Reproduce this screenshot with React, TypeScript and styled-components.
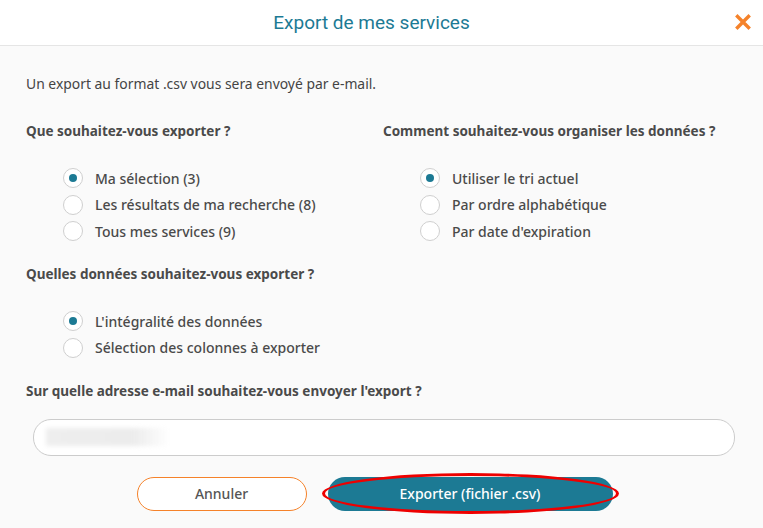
import styled, { createGlobalStyle } from 'styled-components';

const GlobalStyle = createGlobalStyle`
	html, body {
		margin: 0;
		padding: 0;
		background: #fafafa;
	}
	* {
		box-sizing: border-box;
	}
`;

const TEAL = '#1c7a94';
const ORANGE = '#f5822a';

const exportChoices = [
	{ label: 'Ma sélection (3)', checked: true },
	{ label: 'Les résultats de ma recherche (8)', checked: false },
	{ label: 'Tous mes services (9)', checked: false },
];

const sortChoices = [
	{ label: 'Utiliser le tri actuel', checked: true },
	{ label: 'Par ordre alphabétique', checked: false },
	{ label: "Par date d'expiration", checked: false },
];

const dataChoices = [
	{ label: "L'intégralité des données", checked: true },
	{ label: 'Sélection des colonnes à exporter', checked: false },
];

interface Choice {
	label: string;
	checked: boolean;
}

function RadioList({ choices }: { choices: Choice[] }) {
	return (
		<List>
			{choices.map((choice) => (
				<RadioRow key={choice.label}>
					<RadioCircle $checked={choice.checked} />
					<RadioLabel>{choice.label}</RadioLabel>
				</RadioRow>
			))}
		</List>
	);
}

function App() {
	return (
		<Modal>
			<GlobalStyle />
			<Header>
				<Title>Export de mes services</Title>
				<CloseButton aria-label="Fermer">
					<svg width="16" height="16" viewBox="0 0 16 16">
						<path d="M2.5 2.5 L13.5 13.5 M13.5 2.5 L2.5 13.5" stroke={ORANGE} strokeWidth="3.4" strokeLinecap="square" />
					</svg>
				</CloseButton>
			</Header>

			<Body>
				<Intro>Un export au format .csv vous sera envoyé par e-mail.</Intro>

				<Columns>
					<Section>
						<Question>Que souhaitez-vous exporter ?</Question>
						<RadioList choices={exportChoices} />
					</Section>
					<Section>
						<Question>Comment souhaitez-vous organiser les données ?</Question>
						<RadioList choices={sortChoices} />
					</Section>
				</Columns>

				<Section>
					<Question>Quelles données souhaitez-vous exporter ?</Question>
					<RadioList choices={dataChoices} />
				</Section>

				<Question>Sur quelle adresse e-mail souhaitez-vous envoyer l'export ?</Question>
				<EmailField>
					<BlurredValue />
				</EmailField>

				<Actions>
					<CancelButton>Annuler</CancelButton>
					<SubmitWrapper>
						<SubmitButton>Exporter (fichier .csv)</SubmitButton>
						<Highlight />
					</SubmitWrapper>
				</Actions>
			</Body>
		</Modal>
	);
}

const Modal = styled.div`
	width: 763px;
	height: 528px;
	overflow: hidden;
	background: #fafafa;
	font-family: 'Noto Sans', 'Open Sans', sans-serif;
	color: #4a4a4a;
`;

const Header = styled.div`
	position: relative;
	display: flex;
	align-items: center;
	justify-content: center;
	height: 46px;
	padding-right: 20px;
	background: #ffffff;
	border-bottom: 1px solid #e5e5e5;
`;

const Title = styled.h1`
	margin: 0;
	font-family: 'Roboto', 'DejaVu Sans', sans-serif;
	font-size: 19px;
	font-weight: 400;
	color: ${TEAL};
`;

const CloseButton = styled.button`
	position: absolute;
	top: 14px;
	right: 12px;
	display: flex;
	padding: 0;
	border: none;
	background: none;
`;

const Body = styled.div`
	display: flex;
	flex-direction: column;
	padding: 28px 26px 0 26px;
`;

const Intro = styled.p`
	margin: 0 0 27px;
	font-size: 13.9px;
	line-height: 20px;
	color: #444;
`;

const Columns = styled.div`
	display: grid;
	grid-template-columns: 357px 1fr;
`;

const Section = styled.div`
	display: flex;
	flex-direction: column;
`;

const Question = styled.h2`
	margin: 0;
	font-size: 13.5px;
	line-height: 20px;
	font-weight: 700;
	color: #4a4a4a;
`;

const List = styled.div`
	display: flex;
	flex-direction: column;
	gap: 6.5px;
	padding: 27px 0 23px 37px;
`;

const RadioRow = styled.label`
	display: flex;
	align-items: center;
	gap: 12px;
	height: 20px;
`;

const RadioCircle = styled.span<{ $checked: boolean }>`
	position: relative;
	width: 20px;
	height: 20px;
	border-radius: 50%;
	border: 1px solid #cfcfcf;
	background: #ffffff;

	&::after {
		content: '';
		display: ${({ $checked }) => ($checked ? 'block' : 'none')};
		position: absolute;
		top: 5px;
		left: 5px;
		width: 8px;
		height: 8px;
		border-radius: 50%;
		background: ${TEAL};
	}
`;

const RadioLabel = styled.span`
	font-size: 14px;
	font-weight: 500;
	color: #4a4a4a;
`;

const EmailField = styled.div`
	display: flex;
	align-items: center;
	height: 37px;
	margin: 18px 2px 0 7px;
	padding: 0 12px;
	border: 1px solid #cccccc;
	border-radius: 18px;
	background: #ffffff;
`;

const BlurredValue = styled.div`
	width: 124px;
	height: 18px;
	background: linear-gradient(90deg, #eeeeee 0%, #ececec 70%, rgba(240, 240, 240, 0) 100%);
	filter: blur(2px);
`;

const Actions = styled.div`
	display: flex;
	justify-content: center;
	gap: 21px;
	margin-top: 21px;
	padding-right: 14px;
`;

const PillButton = styled.button`
	height: 34px;
	border-radius: 17px;
	font-family: 'Noto Sans', 'Open Sans', sans-serif;
	font-size: 14px;
	font-weight: 500;
`;

const CancelButton = styled(PillButton)`
	width: 170px;
	border: 1px solid ${ORANGE};
	background: #ffffff;
	color: #555;
`;

const SubmitWrapper = styled.div`
	position: relative;
`;

const SubmitButton = styled(PillButton)`
	width: 285px;
	border: none;
	background: ${TEAL};
	color: #ffffff;
`;

const Highlight = styled.span`
	position: absolute;
	top: -4px;
	left: -6px;
	right: -6px;
	bottom: -3px;
	border: 3px solid #ee0000;
	border-radius: 50%;
	pointer-events: none;
`;

export default App;
